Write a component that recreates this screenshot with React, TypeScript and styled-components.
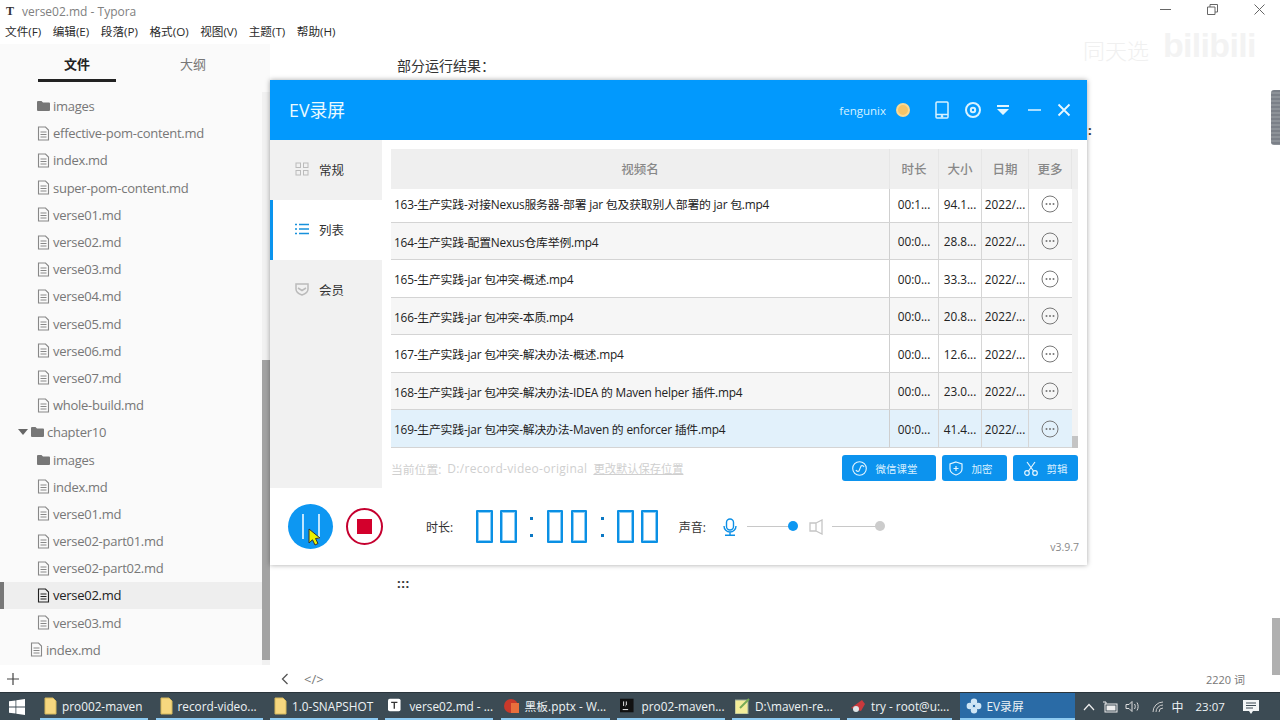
import React from 'react';
import styled, { createGlobalStyle } from 'styled-components';

const CJK = `"Open Sans", "Noto Sans CJK SC", sans-serif`;

const Global = createGlobalStyle`
  html, body { margin: 0; padding: 0; background: #fff; }
  * { box-sizing: border-box; }
`;

const Screen = styled.div`
  position: relative; width: 1280px; height: 720px; overflow: hidden; background: #fff;
  font-family: ${CJK}; display: flex; flex-direction: column;
`;
const TitleBar = styled.div`
  height: 21px; flex: none; display: flex; align-items: center; padding: 1px 0 0 6px; gap: 6px;
  font-size: 12px; color: #808080;
`;
const AppMark = styled.span`font-family: "Liberation Serif", serif; font-weight: 700; font-size: 12px; color: #333; width: 10px;`;
const TitleText = styled.span`flex: 1;`;
const WinControls = styled.div`display: flex; align-items: center; gap: 36px; padding: 0 15px 0 0; margin-top: -4px;`;
const MenuBar = styled.div`
  height: 23px; flex: none; display: flex; align-items: center; padding: 0 0 4px 5px; gap: 11.500px;
  font-size: 11.650px; color: #2a2a2a;
`;
const Main = styled.div`flex: 1; display: flex; min-height: 0;`;
const Sidebar = styled.aside`width: 270px; flex: none; display: flex; flex-direction: column; background: #fafafa;`;
const Tabs = styled.div`height: 48px; flex: none; display: flex; padding: 0 0 0 38px; gap: 38px;`;
const Tab = styled.div<{ $active?: boolean }>`
  width: 78px; height: 38px; display: flex; align-items: center; justify-content: center;
  font-size: 13px; padding-top: 4px; font-weight: ${p => (p.$active ? 700 : 400)};
  color: ${p => (p.$active ? '#222' : '#777')};
  border-bottom: 3px solid ${p => (p.$active ? '#222' : 'transparent')};
`;
const TreeWrap = styled.div`flex: 1; display: flex; min-height: 0;`;
const Tree = styled.div`flex: 1; padding-top: 0.500px; display: flex; flex-direction: column;`;
const TreeRow = styled.div<{ $depth: number; $active?: boolean }>`
  height: 27.200px; flex: none; display: flex; align-items: center; gap: 3px;
  padding-left: ${p => p.$depth}px; font-size: 13px; letter-spacing: -0.270px;
  color: ${p => (p.$active ? '#222' : '#777')};
  background: ${p => (p.$active ? '#eeeeee' : 'transparent')};
  border-left: ${p => (p.$active ? '4px solid #777' : '0')};
`;
const TreeScroll = styled.div`width: 8px; flex: none; background: #f1f1f1; display: flex; flex-direction: column; justify-content: flex-end;`;
const TreeThumb = styled.div`height: 300px; background: #a3a3a3; margin-bottom: 5px;`;
const SideFoot = styled.div`height: 27px; flex: none; background: #fff; display: flex; align-items: center; padding-left: 7px;`;
const Doc = styled.main`flex: 1; position: relative; display: flex; flex-direction: column; min-width: 0;`;
const DocBody = styled.div`flex: 1; padding: 11px 0 0 127px; font-size: 14px; color: #333; display: flex; flex-direction: column;`;
const DocHeading = styled.div`height: 21px; line-height: 21px;`;
const DocDots = styled.div`margin-top: 498px; font-weight: 700; font-size: 13px; letter-spacing: 0.500px;`;
const DocFoot = styled.div`height: 27px; flex: none; display: flex; align-items: center; padding: 0 35px 0 11px; gap: 15px; font-size: 11px; color: #777;`;
const CodeTag = styled.span`font-size: 13px;`;
const WordCount = styled.span`margin-left: auto;`;
const SideDot = styled.div`position: absolute; left: 818px; top: 77px; font-weight: 700; font-size: 13px; color: #333;`;
const Minimap = styled.div`
  position: absolute; right: 0; top: 46px; width: 9px; height: 55px; border-radius: 3px 0 0 3px;
  background: repeating-linear-gradient(#7b8088 0 2px, #8d9298 2px 4px);
`;
const MinimapLow = styled.div`position: absolute; right: 0; bottom: 17px; width: 8px; height: 57px; background: #b0b0b0;`;
const Watermark = styled.div`
  position: absolute; left: 1083px; top: 22px; width: 175px; display: flex; align-items: center; gap: 14px;
  color: #f0f0f0; pointer-events: none;
`;
const WmCn = styled.span`font-size: 22px; font-weight: 300; margin-top: 8px; white-space: nowrap;`;
const WmBili = styled.span`font-family: "Liberation Sans", sans-serif; font-weight: 700; font-size: 34px; letter-spacing: -0.700px; color: #f3f3f3; line-height: 46px;`;

/* EV window */
const EvWindow = styled.section`
  position: absolute; left: 270px; top: 80px; width: 817px; height: 485px; background: #fff;
  box-shadow: 0 0 5px rgba(0,0,0,.35); display: flex; flex-direction: column;
`;
const EvHead = styled.header`
  height: 60px; flex: none; background: #0299fd; color: #fff; display: flex; align-items: center; padding: 0 14px 0 19px;
`;
const EvTitle = styled.div`font-size: 17.800px; flex: 1; color: #eafaff; margin-top: -2px;`;
const EvUser = styled.span`font-size: 11.500px; color: #d6f2ff; margin-right: 10px;`;
const Coin = styled.span`width: 14px; height: 14px; border-radius: 50%; background: #f5c468; margin-right: 23px; border: 2px solid #f9d994;`;
const HeadIcons = styled.div`display: flex; align-items: center; gap: 12.500px;`;
const EvBody = styled.div`flex: none; display: flex; height: 348px;`;
const Nav = styled.nav`width: 112px; flex: none; height: 348px; background: #f1f1f1; display: flex; flex-direction: column;`;
const NavItem = styled.div<{ $active?: boolean }>`
  height: 60px; display: flex; align-items: center; gap: 10px; padding: 0 0 2px ${p => (p.$active ? '22px' : '25px')};
  font-size: 12.500px; color: #333;
  background: ${p => (p.$active ? '#fff' : 'transparent')};
  border-left: ${p => (p.$active ? '3px solid #0a94ee' : '0')};
`;
const Content = styled.div`flex: 1; padding: 9px 9px 0 9px; display: flex; flex-direction: column; min-width: 0;`;
const Table = styled.div`width: 687px; flex: none; display: flex; flex-direction: column; height: 299px; overflow: hidden; position: relative;`;
const Cols = `grid-template-columns: 499px 49px 43px 47px 43px;`;
const HeadRow = styled.div`
  height: 40px; flex: none; display: grid; ${Cols} background: #efefef; font-size: 12.500px; font-weight: 500; color: #888; position: relative; z-index: 1;
  text-align: center; align-items: center;
`;
const HeadCell = styled.div`height: 100%; display: flex; align-items: center; justify-content: center; padding-bottom: 2px; border-right: 1px solid #e6e6e6;`;
const Body = styled.div`flex: 1; overflow: hidden; display: flex; min-height: 0;`;
const Rows = styled.div`width: 681px; flex: none; display: flex; flex-direction: column;`;
const Row = styled.div<{ $alt?: boolean; $sel?: boolean; $first?: boolean }>`
  height: 37.500px; flex: none; display: grid; ${Cols}
  margin-top: ${p => (p.$first ? '-3.750px' : '0')};
  background: ${p => (p.$sel ? '#e2f1fb' : p.$alt ? '#f6f6f6' : '#fff')};
  border-bottom: 1px solid #d4d4d4; font-size: 11.800px; color: #222; align-items: center;
`;
const NameCell = styled.div`padding-left: 3px; height: 100%; display: flex; align-items: center; border-right: 1px solid #cfcfcf; white-space: nowrap; font-size: 11.850px; letter-spacing: -0.200px;`;
const Cell = styled.div`height: 100%; display: flex; align-items: center; justify-content: center; border-right: 1px solid #d6d6d6; white-space: nowrap;`;
const MoreCell = styled.div`height: 100%; display: flex; align-items: center; justify-content: center; padding-right: 2px;`;
const Track = styled.div`width: 6px; flex: none; background: #f3f3f3; display: flex; flex-direction: column; justify-content: flex-end;`;
const Thumb = styled.div`height: 12px; background: #c4c4c4;`;
const ActionRow = styled.div`height: 41px; flex: none; display: flex; align-items: center; width: 687px; font-size: 12px; color: #cfcfcf; padding-bottom: 1px;`;
const PathLabel = styled.span`font-size: 11.800px; margin-right: 6px;`;
const PathValue = styled.span`letter-spacing: 0.300px; margin-right: 6px;`;
const PathLink = styled.span`text-decoration: underline; flex: 1; font-size: 11.250px;`;
const ActionBtn = styled.button<{ $w: number; $pad: number }>`
  width: ${p => p.$w}px; height: 26px; margin-left: 6px; border: 0; border-radius: 3px; background: #0c93ee; color: #d9f0ff;
  display: flex; align-items: center; justify-content: center; gap: 9px; font: 400 10.500px ${CJK}; padding: 0 ${p => p.$pad}px 0 0;
`;
const Foot = styled.footer`flex: 1; display: flex; align-items: center; padding: 0 8px 0 18px; position: relative;`;
const PauseBtn = styled.div`width: 45px; height: 45px; border-radius: 50%; background: #0d97f2; display: flex; align-items: center; justify-content: center; gap: 14px; position: relative;`;
const PauseBar = styled.span`width: 2px; height: 25px; background: #bfe6ff;`;
const Cursor = styled.svg`position: absolute; left: 20px; top: 24px;`;
const StopBtn = styled.div`width: 37px; height: 37px; margin-left: 13px; border-radius: 50%; border: 2px solid #c5002f; display: flex; align-items: center; justify-content: center;`;
const StopSquare = styled.span`width: 15px; height: 15px; background: #d3002c;`;
const DurLabel = styled.span`font-size: 12px; color: #333; margin-left: 43px; margin-right: 23px; white-space: nowrap;`;
const Clock = styled.div`display: flex; align-items: center;`;
const Digit = styled.span`
  width: 16.500px; height: 33px; border: 2.500px solid #0b90e4; margin-right: 7.500px; box-shadow: inset 0 0 0 1px #8ccdf5; border-radius: 1px;
`;
const ColonDots = styled.span`width: 3px; height: 20px; margin: 0 13.500px 0 6px; border-top: 3px solid #0b78c4; border-bottom: 3px solid #0b78c4;`;
const SoundLabel = styled.span`font-size: 12px; color: #333; margin-left: 13.500px; margin-right: 16px; white-space: nowrap;`;
const Slider = styled.div<{ $w: number }>`width: ${p => p.$w}px; height: 1px; background: #c8c8c8; position: relative; margin: 0 0 0 9px;`;
const Knob = styled.span<{ $c: string }>`position: absolute; right: -5px; top: -5px; width: 10px; height: 10px; border-radius: 50%; background: ${p => p.$c};`;
const SpeakerIcon = styled.svg`margin-left: 16px;`;
const Version = styled.span`position: absolute; right: 8px; bottom: 11px; font-size: 10.500px; color: #888;`;

/* Taskbar */
const Taskbar = styled.footer`height: 28px; flex: none; background: #3c4b54; display: flex; align-items: center; color: #eef3f5; font-size: 11.800px; border-top: 1px solid #2a353c;`;
const StartBtn = styled.div`width: 40px; display: flex; justify-content: center; padding-right: 7px;`;
const TaskItem = styled.div<{ $w: number; $active?: boolean; $gap?: number }>`
  width: ${p => p.$w}px; height: 100%; flex: none; display: flex; align-items: center; gap: ${p => p.$gap ?? 5}px; padding-left: ${p => (p.$active ? '6px' : '3px')};
  margin-right: ${p => (p.$active ? '8px' : '7.500px')}; white-space: nowrap; overflow: hidden;
  background: ${p => (p.$active ? '#2a6ba6' : 'transparent')};
  border-bottom: 2px solid #8ecbf2;
`;
const Tray = styled.div`flex: 1; display: flex; align-items: center; gap: 7px; padding-left: 0; font-size: 12px;`;
const WifiIcon = styled.svg`margin-left: 5px;`;
const Clocktext = styled.span`margin: 0 11px 0 5px; font-size: 11.500px;`;

const FileIcon = ({ dark }: { dark?: boolean }) => (
  <svg width="13" height="15" viewBox="0 0 13 15" fill="none" stroke={dark ? '#222' : '#888'} strokeWidth="1.100">
    <path d="M1.500 1h7l3 3v10h-10z" />
    <path d="M3.500 6h6M3.500 8.500h6M3.500 11h6" />
  </svg>
);
const FolderIcon = () => (
  <svg width="13" height="12" viewBox="0 0 13 12" fill="#777"><path d="M0 2a1 1 0 0 1 1-1h3.500l1.500 1.500h6a1 1 0 0 1 1 1V10a1 1 0 0 1-1 1H1a1 1 0 0 1-1-1z" /></svg>
);
const Caret = () => (
  <svg width="10" height="8" viewBox="0 0 10 8" fill="#666"><path d="M0 1h10L5 7z" /></svg>
);
const Files = ({ s }: { s?: string }) => (
  <svg width="15" height="18" viewBox="0 0 15 18"><path d="M2 1h8l3 3v13H2z" fill={s || '#f6d77f'} stroke="#d4b85c" /></svg>
);

const tree: { t: string; d: number; k?: 'folder' | 'open'; a?: boolean }[] = [
  { t: 'images', d: 37, k: 'folder' },
  { t: 'effective-pom-content.md', d: 37 },
  { t: 'index.md', d: 37 },
  { t: 'super-pom-content.md', d: 37 },
  { t: 'verse01.md', d: 37 },
  { t: 'verse02.md', d: 37 },
  { t: 'verse03.md', d: 37 },
  { t: 'verse04.md', d: 37 },
  { t: 'verse05.md', d: 37 },
  { t: 'verse06.md', d: 37 },
  { t: 'verse07.md', d: 37 },
  { t: 'whole-build.md', d: 37 },
  { t: 'chapter10', d: 18, k: 'open' },
  { t: 'images', d: 37, k: 'folder' },
  { t: 'index.md', d: 37 },
  { t: 'verse01.md', d: 37 },
  { t: 'verse02-part01.md', d: 37 },
  { t: 'verse02-part02.md', d: 37 },
  { t: 'verse02.md', d: 33, a: true },
  { t: 'verse03.md', d: 37 },
  { t: 'index.md', d: 30 },
];

const rows = [
  ['163-生产实践-对接Nexus服务器-部署 jar 包及获取别人部署的 jar 包.mp4', '00:1...', '94.1...'],
  ['164-生产实践-配置Nexus仓库举例.mp4', '00:0...', '28.8...'],
  ['165-生产实践-jar 包冲突-概述.mp4', '00:0...', '33.3...'],
  ['166-生产实践-jar 包冲突-本质.mp4', '00:0...', '20.8...'],
  ['167-生产实践-jar 包冲突-解决办法-概述.mp4', '00:0...', '12.6...'],
  ['168-生产实践-jar 包冲突-解决办法-IDEA 的 Maven helper 插件.mp4', '00:0...', '23.0...'],
  ['169-生产实践-jar 包冲突-解决办法-Maven 的 enforcer 插件.mp4', '00:0...', '41.4...'],
];

const MoreIcon = () => (
  <svg width="18" height="18" viewBox="0 0 18 18" fill="none" stroke="#777"><circle cx="9" cy="9" r="8" /><g fill="#777" stroke="none"><circle cx="5.500" cy="9" r="1" /><circle cx="9" cy="9" r="1" /><circle cx="12.500" cy="9" r="1" /></g></svg>
);

export default function App() {
  return (
    <Screen>
      <Global />
      <TitleBar>
        <AppMark>T</AppMark>
        <TitleText>verse02.md - Typora</TitleText>
        <WinControls>
          <svg width="11" height="11" viewBox="0 0 11 11" stroke="#666" fill="none"><path d="M0 5.500h11" /></svg>
          <svg width="11" height="11" viewBox="0 0 11 11" stroke="#666" fill="none"><path d="M.5 3h7.500v7.500H.5zM3 3V.5h7.500V8H8" /></svg>
          <svg width="11" height="11" viewBox="0 0 11 11" stroke="#666" fill="none"><path d="M.5.5l10 10M10.500.5l-10 10" /></svg>
        </WinControls>
      </TitleBar>
      <MenuBar>
        {['文件(F)', '编辑(E)', '段落(P)', '格式(O)', '视图(V)', '主题(T)', '帮助(H)'].map(m => <span key={m}>{m}</span>)}
      </MenuBar>
      <Main>
        <Sidebar>
          <Tabs><Tab $active>文件</Tab><Tab>大纲</Tab></Tabs>
          <TreeWrap>
            <Tree>
              {tree.map((r, i) => (
                <TreeRow key={i} $depth={r.d} $active={r.a}>
                  {r.k === 'open' && <Caret />}
                  {r.k === 'open' || r.k === 'folder' ? <FolderIcon /> : <FileIcon dark={r.a} />}
                  <span>{r.t}</span>
                </TreeRow>
              ))}
            </Tree>
            <TreeScroll><TreeThumb /></TreeScroll>
          </TreeWrap>
          <SideFoot>
            <svg width="12" height="12" viewBox="0 0 12 12" stroke="#444" strokeWidth="1.200"><path d="M6 0v12M0 6h12" /></svg>
          </SideFoot>
        </Sidebar>
        <Doc>
          <DocBody>
            <DocHeading>部分运行结果：</DocHeading>
            <DocDots>:::</DocDots>
          </DocBody>
          <DocFoot>
            <svg width="8" height="12" viewBox="0 0 8 12" fill="none" stroke="#555" strokeWidth="1.300"><path d="M6.500 1l-5 5 5 5" /></svg>
            <CodeTag>&lt;/&gt;</CodeTag>
            <WordCount>2220 词</WordCount>
          </DocFoot>
          <SideDot>:</SideDot>
          <Minimap />
          <MinimapLow />
        </Doc>
      </Main>
      <Taskbar>
        <StartBtn>
          <svg width="16" height="16" viewBox="0 0 16 16" fill="#fff"><path d="M0 2.300 6.500 1.400v6.200H0zM7.300 1.300 16 0v7.600H7.300zM0 8.400h6.500v6.200L0 13.700zM7.300 8.400H16V16l-8.700-1.300z" /></svg>
        </StartBtn>
        <TaskItem $w={108} $gap={4}><Files />pro002-maven</TaskItem>
        <TaskItem $w={107} $gap={4}><Files />record-video...</TaskItem>
        <TaskItem $w={107.500} $gap={4}><Files />1.0-SNAPSHOT</TaskItem>
        <TaskItem $w={108} $gap={8}>
          <svg width="15" height="15" viewBox="0 0 15 15"><rect width="14" height="14" rx="2" fill="#fff" /><path d="M3.500 4h7M7 4v7" stroke="#333" strokeWidth="1.500" /></svg>
          verse02.md - ...
        </TaskItem>
        <TaskItem $w={109}>
          <svg width="16" height="16" viewBox="0 0 16 16"><circle cx="7" cy="8" r="7" fill="#c8392b" /><rect x="7" y="5" width="8" height="10" fill="#e86f3c" /></svg>
          黑板.pptx - W...
        </TaskItem>
        <TaskItem $w={107.500} $gap={8}>
          <svg width="15" height="15" viewBox="0 0 15 15"><rect width="15" height="15" fill="#111" /><path d="M3 12h6" stroke="#fff" /><path d="M4 3v5M7 3v4l-1 1" stroke="#fff" fill="none" /></svg>
          pro02-maven...
        </TaskItem>
        <TaskItem $w={107.500}>
          <svg width="15" height="16" viewBox="0 0 15 16"><rect y="2" width="13" height="14" fill="#f4ed9a" stroke="#9a9" /><path d="M5 10 14 1" stroke="#7a5" strokeWidth="2" /></svg>
          D:\maven-re...
        </TaskItem>
        <TaskItem $w={105}>
          <svg width="16" height="16" viewBox="0 0 16 16"><path d="M1 10 12 2l3 4-4 7z" fill="#c9393c" /><circle cx="6" cy="11" r="3" fill="#dfe6e8" /></svg>
          try - root@u:...
        </TaskItem>
        <TaskItem $w={115} $active>
          <svg width="16" height="16" viewBox="0 0 16 16" fill="#cfe6f5"><circle cx="8" cy="3.800" r="3.200" /><circle cx="3.800" cy="8" r="3.200" /><circle cx="12.200" cy="8" r="3.200" /><circle cx="8" cy="12.200" r="3.200" /></svg>
          EV录屏
        </TaskItem>
        <Tray>
          <svg width="12" height="8" viewBox="0 0 12 8" fill="none" stroke="#eee" strokeWidth="1.200"><path d="M1 7l5-5.500L11 7" /></svg>
          <svg width="16" height="12" viewBox="0 0 16 12" fill="none" stroke="#eee"><rect x="3" y="3" width="12" height="8" /><rect x="5" y="5" width="8" height="4" fill="#eee" /><path d="M1 1h3v2" /></svg>
          <svg width="15" height="13" viewBox="0 0 15 13" fill="none" stroke="#ddd"><path d="M1 4.500h3l3-3v10l-3-3H1z" /><path d="M9.500 4c1 1.500 1 3.500 0 5M12 2.500c1.500 2.500 1.500 5.500 0 8" /></svg>
          <WifiIcon width="13" height="12" viewBox="0 0 13 12" fill="none" stroke="#ccc"><path d="M1 11a10 10 0 0 1 10-10M4 11a7 7 0 0 1 7-7M7 11a4 4 0 0 1 4-4" /></WifiIcon>
          <span>中</span>
          <Clocktext>23:07</Clocktext>
          <svg width="16" height="16" viewBox="0 0 16 16"><path d="M0 1h16v11h-6l-2 3-2-3H0z" fill="#f2f5f6" /><path d="M3 4h10M3 6.500h10M3 9h7" stroke="#3c4b54" /></svg>
        </Tray>
      </Taskbar>

      <Watermark>
        <WmCn>同天选</WmCn>
        <WmBili>bilibili</WmBili>
      </Watermark>

      <EvWindow>
        <EvHead>
          <EvTitle>EV录屏</EvTitle>
          <EvUser>fengunix</EvUser>
          <Coin />
          <HeadIcons>
            <svg width="18" height="18" viewBox="0 0 14 18" fill="none" stroke="#d8f2ff" strokeWidth="1.500"><rect x="1" y="1" width="12" height="16" rx="1" /><path d="M1 13.500h12" /><circle cx="7" cy="15.300" r=".6" /></svg>
            <svg width="18" height="18" viewBox="0 0 18 18" fill="none" stroke="#d8f2ff" strokeWidth="2"><circle cx="9" cy="9" r="7" /><circle cx="9" cy="9" r="2.200" /></svg>
            <svg width="18" height="18" viewBox="0 0 18 18" fill="#e2f6ff"><path d="M3 4h12v2H3zM3 8h12l-6 6z" /></svg>
            <svg width="18" height="18" viewBox="0 0 18 18" stroke="#e2f6ff" strokeWidth="1.500"><path d="M3 9h13" /></svg>
            <svg width="18" height="18" viewBox="0 0 18 18" stroke="#e8f8ff" strokeWidth="1.800"><path d="M3.500 3.500l11 11M14.500 3.500l-11 11" /></svg>
          </HeadIcons>
        </EvHead>
        <EvBody>
          <Nav>
            <NavItem>
              <svg width="14" height="14" viewBox="0 0 14 14" fill="none" stroke="#bbb"><rect x="1" y="1" width="4.500" height="4.500" /><rect x="8.500" y="1" width="4.500" height="4.500" /><rect x="1" y="8.500" width="4.500" height="4.500" /><rect x="8.500" y="8.500" width="4.500" height="4.500" /></svg>
              常规
            </NavItem>
            <NavItem $active>
              <svg width="14" height="12" viewBox="0 0 14 12" stroke="#1791dc" strokeWidth="1.300"><path d="M0 1.500h2M4 1.500h10M0 6h2M4 6h10M0 10.500h2M4 10.500h10" /></svg>
              列表
            </NavItem>
            <NavItem>
              <svg width="14" height="13" viewBox="0 0 14 13" fill="none" stroke="#bbb" strokeWidth="1.500"><path d="M1 1h12v5c0 3-3 5-6 6-3-1-6-3-6-6z" /><path d="M3 5l4 2.500L11 5" /></svg>
              会员
            </NavItem>
          </Nav>
          <Content>
            <Table>
              <HeadRow>
                <HeadCell>视频名</HeadCell><HeadCell>时长</HeadCell><HeadCell>大小</HeadCell><HeadCell>日期</HeadCell><HeadCell>更多</HeadCell>
              </HeadRow>
              <Body>
                <Rows>
                  {rows.map((r, i) => (
                    <Row key={i} $first={i === 0} $alt={i % 2 === 1} $sel={i === 6}>
                      <NameCell>{r[0]}</NameCell>
                      <Cell>{r[1]}</Cell>
                      <Cell>{r[2]}</Cell>
                      <Cell>2022/...</Cell>
                      <MoreCell><MoreIcon /></MoreCell>
                    </Row>
                  ))}
                </Rows>
                <Track><Thumb /></Track>
              </Body>
            </Table>
            <ActionRow>
              <PathLabel>当前位置:</PathLabel>
              <PathValue>D:/record-video-original</PathValue>
              <PathLink>更改默认保存位置</PathLink>
              <ActionBtn $w={94} $pad={9}>
                <svg width="15" height="15" viewBox="0 0 15 15" fill="none" stroke="#e4f5ff" strokeWidth="1.100"><circle cx="7.500" cy="7.500" r="6.800" /><path d="M4 9a2 2 0 0 0 3 1l2-5a2 2 0 0 1 3 1" /></svg>
                微信课堂
              </ActionBtn>
              <ActionBtn $w={65} $pad={8}>
                <svg width="14" height="15" viewBox="0 0 14 15" fill="none" stroke="#e4f5ff" strokeWidth="1.200"><path d="M7 1l6 2v5c0 3-3 5-6 6-3-1-6-3-6-6V3z" /><path d="M7 5v5M4.500 7.500h5" /></svg>
                加密
              </ActionBtn>
              <ActionBtn $w={65} $pad={0}>
                <svg width="14" height="15" viewBox="0 0 14 15" fill="none" stroke="#e4f5ff" strokeWidth="1.200"><circle cx="3" cy="12" r="2.300" /><circle cx="11" cy="12" r="2.300" /><path d="M4.500 10 11 1M9.500 10 3 1" /></svg>
                剪辑
              </ActionBtn>
            </ActionRow>
          </Content>
        </EvBody>
        <Foot>
          <PauseBtn>
            <PauseBar /><PauseBar />
            <Cursor width="13" height="18" viewBox="0 0 13 18"><path d="M1 1v14l3.500-3.200L7 17l3-1.500-2.500-5L12 10z" fill="#e8f000" stroke="#333" /></Cursor>
          </PauseBtn>
          <StopBtn><StopSquare /></StopBtn>
          <DurLabel>时长:</DurLabel>
          <Clock aria-label="00:00:00">
            <Digit /><Digit /><ColonDots />
            <Digit /><Digit /><ColonDots />
            <Digit /><Digit />
          </Clock>
          <SoundLabel>声音:</SoundLabel>
          <svg width="16" height="18" viewBox="0 0 16 18" fill="none" stroke="#0c8fe6" strokeWidth="1.400"><rect x="4.500" y="1" width="7" height="11" rx="3.500" /><path d="M2 8a6 6 0 0 0 12 0M8 14v2.500M3 17.300h10" /></svg>
          <Slider $w={46}><Knob $c="#0d97f2" /></Slider>
          <SpeakerIcon width="14" height="16" viewBox="0 0 14 16" fill="none" stroke="#c5c5c5" strokeWidth="1.300"><path d="M1 4h6v8H1zM7 4l6-3v14l-6-3" /></SpeakerIcon>
          <Slider $w={48}><Knob $c="#cccccc" /></Slider>
          <Version>v3.9.7</Version>
        </Foot>
      </EvWindow>
    </Screen>
  );
}
